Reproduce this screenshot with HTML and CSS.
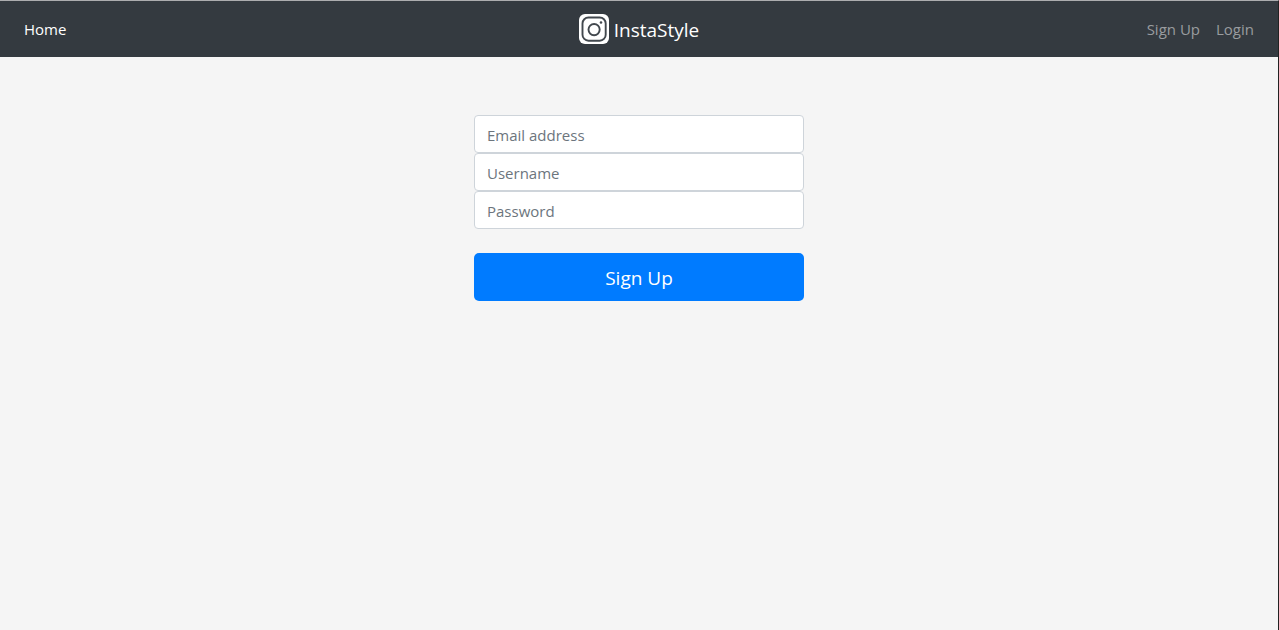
FILE: index.html
```html
<!DOCTYPE html>
<html lang="en">
<head>
<meta charset="utf-8">
<title>InstaStyle</title>
<link rel="stylesheet" href="styles.css">
</head>
<body>
<nav class="navbar">
  <div class="nav-side">
    <a class="nav-link active" href="#">Home</a>
  </div>
  <a class="brand" href="#">
    <svg class="brand-logo" viewBox="0 0 30 30" aria-hidden="true">
      <rect width="30" height="30" rx="6" fill="#fff"/>
      <rect x="3.5" y="3.5" width="23.2" height="23.2" rx="6" fill="none" stroke="#42484e" stroke-width="1.9"/>
      <circle cx="15.1" cy="15.6" r="5.6" fill="none" stroke="#42484e" stroke-width="1.9"/>
      <circle cx="22" cy="8.5" r="1.3" fill="#42484e"/>
    </svg>
    <span class="brand-name">InstaStyle</span>
  </a>
  <div class="nav-side nav-end">
    <a class="nav-link" href="#">Sign Up</a>
    <a class="nav-link" href="#">Login</a>
  </div>
</nav>
<main class="page">
  <form class="signup">
    <input class="field" type="email" placeholder="Email address" aria-label="Email address">
    <input class="field" type="text" placeholder="Username" aria-label="Username">
    <input class="field" type="password" placeholder="Password" aria-label="Password">
    <button class="submit" type="submit">Sign Up</button>
  </form>
</main>
</body>
</html>
```
FILE: styles.css
```css
* {
  box-sizing: border-box;
}

body {
  margin: 0;
  min-height: 100vh;
  border-top: 1px solid #acadaf;
  border-right: 1px solid #222;
  background: #f5f5f5;
  font-family: "Open Sans", "Noto Sans", sans-serif;
  font-size: 15px;
  line-height: 24px;
}

.navbar {
  display: flex;
  align-items: center;
  padding: 8px 16px;
  background: #343a40;
}

.nav-side {
  display: flex;
  flex: 1;
}

.nav-end {
  justify-content: flex-end;
}

.nav-link {
  padding: 8px;
  color: #999c9f;
  text-decoration: none;
}

.nav-link.active {
  color: #fff;
}

.brand {
  display: flex;
  align-items: center;
  gap: 5px;
  color: #fff;
  font-size: 19px;
  line-height: 28px;
  text-decoration: none;
}

.brand-logo {
  width: 30px;
  height: 30px;
}

.brand-name {
  padding-top: 2px;
}

.page {
  padding: 58px 16px;
}

.signup {
  display: flex;
  flex-direction: column;
  max-width: 330px;
  margin: 0 auto;
}

.field {
  width: 100%;
  height: 38px;
  padding: 8px 12px 6px;
  border: 1px solid #ced4da;
  border-radius: 4px;
  background: #fff;
  color: #495057;
  font: inherit;
}

.field::placeholder {
  color: #6c757d;
  opacity: 1;
}

.submit {
  margin-top: 24px;
  padding: 10px 16px 8px;
  border: 0;
  border-radius: 5px;
  background: #007bff;
  color: #fff;
  font: inherit;
  font-size: 19px;
  line-height: 30px;
  cursor: pointer;
}
```
